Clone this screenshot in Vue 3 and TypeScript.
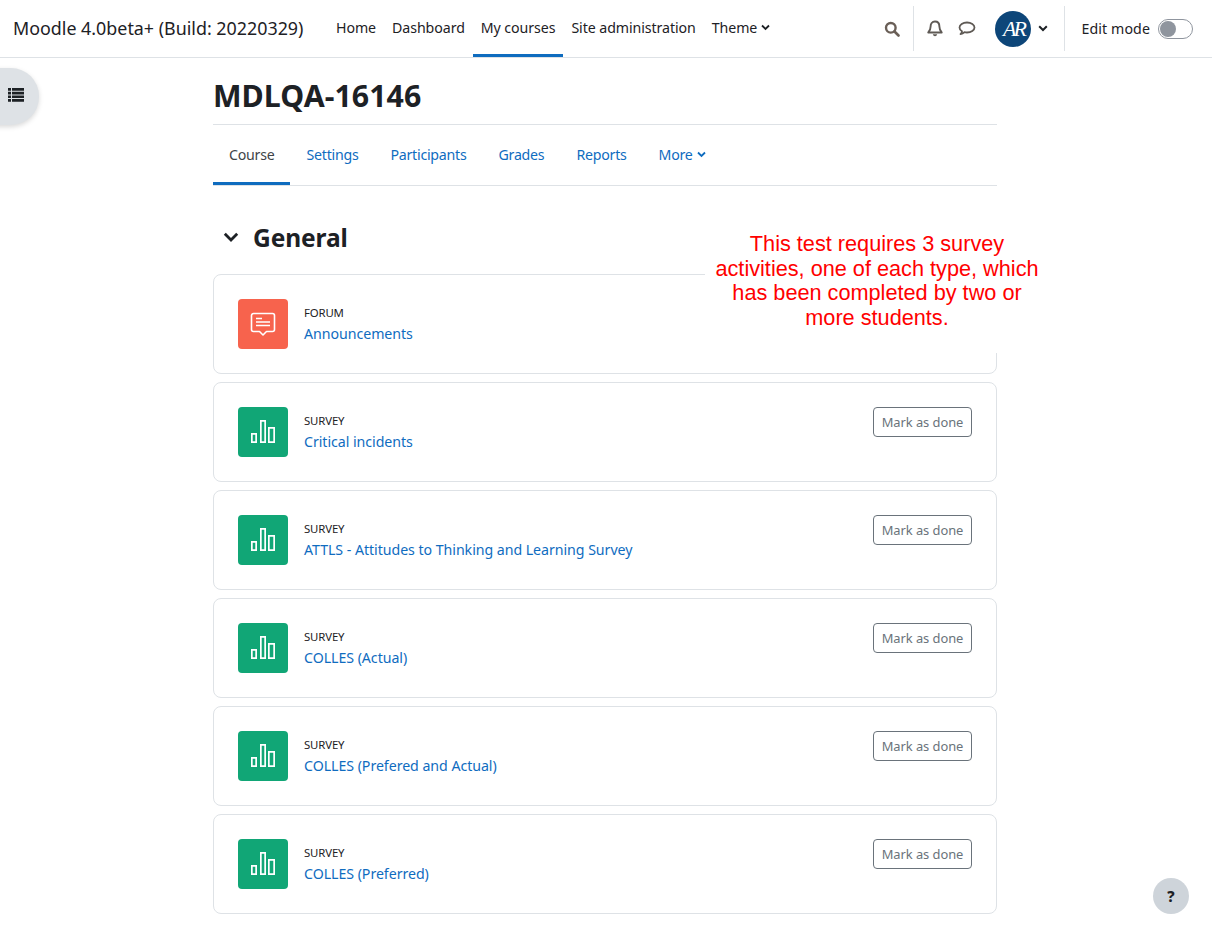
<script setup lang="ts">
const navItems = [
  { label: 'Home', active: false },
  { label: 'Dashboard', active: false },
  { label: 'My courses', active: true },
  { label: 'Site administration', active: false },
]
const tabs = ['Settings', 'Participants', 'Grades', 'Reports']
const activities = [
  { type: 'FORUM', name: 'Announcements', forum: true },
  { type: 'SURVEY', name: 'Critical incidents', forum: false },
  { type: 'SURVEY', name: 'ATTLS - Attitudes to Thinking and Learning Survey', forum: false },
  { type: 'SURVEY', name: 'COLLES (Actual)', forum: false },
  { type: 'SURVEY', name: 'COLLES (Prefered and Actual)', forum: false },
  { type: 'SURVEY', name: 'COLLES (Preferred)', forum: false },
]
</script>

<template>
  <div class="page">
    <header class="topbar">
      <span class="brand">Moodle 4.0beta+ (Build: 20220329)</span>
      <nav class="mainnav">
        <a v-for="n in navItems" :key="n.label" class="navlink" :class="{ on: n.active }">{{ n.label }}</a>
        <a class="navlink">Theme
          <svg class="chev" width="9" height="7" viewBox="0 0 9 7"><path d="M1 1.500l3.500 3.500L8 1.500" fill="none" stroke="#1d2125" stroke-width="1.800" /></svg>
        </a>
      </nav>
      <div class="tools">
        <svg class="search" width="16" height="16" viewBox="0 0 16 16"><circle cx="6.800" cy="6.800" r="4.800" fill="none" stroke="#6a5f57" stroke-width="2.400" /><path d="M10.500 10.500l4 4" stroke="#6a5f57" stroke-width="2.600" stroke-linecap="round" /></svg>
        <div class="vline first"></div>
        <svg class="bell" width="16" height="17" viewBox="0 0 16 17"><path d="M8 1.500c-3 0-4.400 2.300-4.400 5 0 3.200-1 4.600-2.300 6h13.400c-1.300-1.400-2.300-2.800-2.300-6 0-2.700-1.400-5-4.400-5z" fill="none" stroke="#5f5a55" stroke-width="1.900" stroke-linejoin="round" /><path d="M5.800 14.300c.3 1.300 1.100 2 2.200 2s1.900-.7 2.200-2z" fill="#5f5a55" /></svg>
        <svg class="chat" width="18" height="15" viewBox="0 0 18 15"><path d="M9 1.500c4.200 0 7.500 2.200 7.500 5s-3.300 5-7.500 5c-.9 0-1.700-.1-2.500-.3-1 1-2.300 1.800-4 2 .9-.9 1.400-1.900 1.500-2.900C2.400 9.400 1.500 8 1.500 6.500c0-2.800 3.300-5 7.500-5z" fill="none" stroke="#5f5a55" stroke-width="1.800" stroke-linejoin="round" /></svg>
        <div class="avatar"><span>AR</span></div>
        <svg class="uchev" width="10" height="7" viewBox="0 0 10 7"><path d="M1.200 1.300L5 5l3.800-3.700" fill="none" stroke="#1d2125" stroke-width="2" /></svg>
        <div class="vline second"></div>
        <span class="edit">Edit mode</span>
        <div class="toggle"><div class="knob"></div></div>
      </div>
    </header>

    <button class="drawer" aria-label="Course index">
      <svg width="16" height="14" viewBox="0 0 16 14"><path d="M0 0h16v2.700H0zM0 3.700h16v2.700H0zM0 7.400h16v2.700H0zM0 11.100h16v2.700H0z" fill="#1d2125" /><path d="M3.500 0v14" stroke="#dee2e6" stroke-width="1" /></svg>
    </button>

    <main class="content">
      <h1 class="title">MDLQA-16146</h1>
      <div class="tabs">
        <a class="tab on">Course</a>
        <a v-for="t in tabs" :key="t" class="tab">{{ t }}</a>
        <a class="tab">More
          <svg class="chev" width="9" height="7" viewBox="0 0 9 7"><path d="M1 1.500l3.500 3.500L8 1.500" fill="none" stroke="#0f6cbf" stroke-width="1.800" /></svg>
        </a>
      </div>
      <div class="section">
        <svg width="16" height="11" viewBox="0 0 16 11"><path d="M1.800 1.800L8 8l6.200-6.200" fill="none" stroke="#1d2125" stroke-width="2.800" /></svg>
        <h2>General</h2>
      </div>
      <div class="list">
        <article v-for="a in activities" :key="a.name" class="card">
          <div class="icon" :class="a.forum ? 'forum' : 'survey'">
            <svg v-if="a.forum" width="26" height="26" viewBox="0 0 26 26">
              <path d="M3.500 2.500h19a2 2 0 0 1 2 2v14a2 2 0 0 1-2 2h-6L13 24l-3.500-3.500h-6a2 2 0 0 1-2-2v-14a2 2 0 0 1 2-2z" fill="none" stroke="#fff" stroke-width="1.600" stroke-linejoin="round" />
              <path d="M6 7.500h6M6 11h14M6 14.500h14" stroke="#fff" stroke-width="1.500" />
            </svg>
            <svg v-else width="26" height="26" viewBox="0 0 26 26">
              <path d="M1.850 14.850h4.300v8.300H1.850zM10.850 1.850h4.300v21.300h-4.300zM18.850 8.850h5.300v14.300h-5.300z" fill="none" stroke="#fff" stroke-width="1.700" />
            </svg>
          </div>
          <div class="meta">
            <div class="type">{{ a.type }}</div>
            <a class="name">{{ a.name }}</a>
          </div>
          <button v-if="!a.forum" class="done">Mark as done</button>
        </article>
      </div>
    </main>

    <div class="note">This test requires 3 survey activities, one of each type, which has been completed by two or more students.</div>
    <div class="help">?</div>
  </div>
</template>

<style>
html, body { margin: 0; background: #fff; }
</style>

<style scoped>
.page {
  position: relative;
  height: 930px;
  overflow: hidden;
  font-family: "Noto Sans", "Open Sans", sans-serif;
  color: #1d2125;
  background: #fff;
}
.topbar {
  display: flex;
  align-items: stretch;
  height: 57px;
  border-bottom: 1px solid #dee2e6;
  padding-left: 13px;
}
.brand {
  font-size: 17.880px;
  line-height: 56px;
  width: 315px;
  white-space: nowrap;
}
.mainnav { display: flex; }
.navlink {
  display: flex;
  align-items: center;
  gap: 4px;
  padding: 0 8px;
  font-size: 14.200px;
  letter-spacing: -0.08px;
  white-space: nowrap;
  border-bottom: 3px solid transparent;
  box-sizing: border-box;
  height: 57px;
}
.navlink.on { border-bottom-color: #0f6cbf; }
.tools {
  margin-left: auto;
  display: flex;
  align-items: center;
  padding-right: 19px;
}
.vline { width: 1px; height: 45px; background: #dee2e6; }
.vline.first { margin: 0 13px; }
.bell { margin-right: 15px; }
.avatar {
  width: 36px;
  height: 36px;
  border-radius: 50%;
  background: #0d4679;
  color: #fff;
  display: flex;
  align-items: center;
  justify-content: center;
  margin-left: 19px;
  font: italic 22px "Liberation Serif", serif;
  letter-spacing: -3px;
}
.uchev { margin-left: 7px; }
.vline.second { margin: 0 16px; }
.edit { font-size: 14.200px; letter-spacing: 0.1px; white-space: nowrap; }
.toggle {
  margin-left: 8px;
  width: 35px;
  height: 20px;
  box-sizing: border-box;
  border: 1px solid #8f959e;
  border-radius: 10px;
  padding: 1px;
}
.knob { width: 16px; height: 16px; border-radius: 50%; background: #8f959e; }
.drawer {
  position: absolute;
  left: -10px;
  top: 68px;
  width: 49px;
  height: 57px;
  border: 0;
  border-radius: 0 28px 28px 0;
  background: #dee2e6;
  box-shadow: 0 2px 5px rgba(0, 0, 0, 0.15);
  padding: 0 0 3px 18px;
  display: flex;
  align-items: center;
}
.content { width: 784px; margin-left: 213px; }
.title {
  margin: 0;
  height: 66px;
  border-bottom: 1px solid #dee2e6;
  font-size: 30.300px;
  font-weight: 700;
  line-height: 75px;
  letter-spacing: 0.05px;
}
.tabs {
  display: flex;
  height: 60px;
  border-bottom: 1px solid #dee2e6;
}
.tab {
  display: flex;
  align-items: center;
  gap: 4px;
  padding: 2px 16px 0;
  color: #0f6cbf;
  font-size: 14.200px;
  letter-spacing: -0.25px;
  height: 60px;
  box-sizing: border-box;
  border-bottom: 3px solid transparent;
}
.tab.on { color: #404448; border-bottom-color: #0f6cbf; }
.section {
  display: flex;
  align-items: center;
  height: 88px;
  padding: 15px 0 0 10px;
  box-sizing: border-box;
}
.section h2 {
  margin: 0 0 0 14px;
  font-size: 24.500px;
  font-weight: 700;
  letter-spacing: -0.1px;
}
.list { display: flex; flex-direction: column; gap: 8px; }
.card {
  display: flex;
  height: 100px;
  box-sizing: border-box;
  border: 1px solid #dee2e6;
  border-radius: 8px;
  padding: 24px;
}
.icon {
  width: 50px;
  height: 50px;
  border-radius: 4px;
  display: flex;
  align-items: center;
  justify-content: center;
  flex: none;
}
.forum { background: #f7634d; }
.survey { background: #11a676; }
.meta { margin-left: 16px; flex: 1; }
.type {
  font-size: 11.400px;
  line-height: 16px;
  margin-top: 6px;
  letter-spacing: -0.15px;
}
.name {
  display: block;
  color: #0f6cbf;
  font-size: 14.200px;
  line-height: 24px;
  margin-top: 1px;
  letter-spacing: -0.05px;
}
.done {
  align-self: flex-start;
  width: 99px;
  height: 30px;
  padding: 0;
  background: #fff;
  border: 1px solid #6a737b;
  border-radius: 4px;
  color: #6a737b;
  font-family: inherit;
  font-size: 12.900px;
  letter-spacing: -0.05px;
}
.note {
  position: absolute;
  left: 705px;
  top: 232px;
  width: 344px;
  height: 121px;
  box-sizing: border-box;
  padding: 0 5px;
  background: #fff;
  color: #f00;
  text-align: center;
  font-family: "Liberation Sans", Arial, sans-serif;
  font-size: 21.700px;
  line-height: 24.700px;
}
.help {
  position: absolute;
  left: 1153px;
  top: 878px;
  width: 36px;
  height: 36px;
  border-radius: 50%;
  background: #ced4da;
  color: #1d2125;
  font-size: 15px;
  font-weight: 800;
  line-height: 36px;
  text-align: center;
}
</style>
